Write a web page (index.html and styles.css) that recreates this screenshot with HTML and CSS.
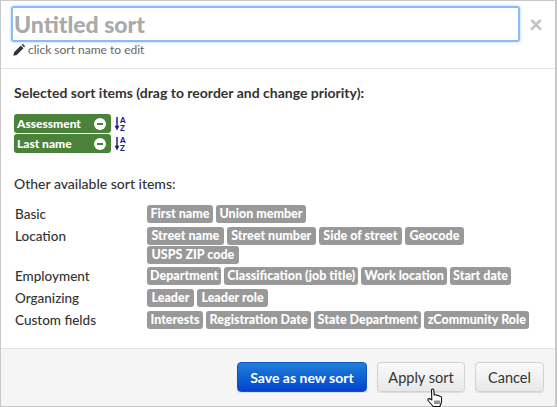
FILE: index.html
```html
<!DOCTYPE html>
<html lang="en">
<head>
  <meta charset="UTF-8" />
  <title>Edit sort</title>
  <link rel="stylesheet" href="styles.css">
</head>
<body>
  <div class="modal">
    <div class="modal-header">
      <div class="name-row">
        <input class="sort-name" type="text" placeholder="Untitled sort" />
        <span class="close">&times;</span>
      </div>
      <div class="hint">
        <svg class="pencil" width="12" height="12" viewBox="0 0 11 11"><path d="M0.3 10.7 L1 7.6 L7.2 1.4 L9.6 3.8 L3.4 10 Z M7.9 0.7 L8.4 0.3 Q9 0 9.5 0.3 L10.7 1.5 Q11 2 10.7 2.6 L10.3 3.1 Z" fill="#333"/></svg>
        click sort name to edit
      </div>
    </div>

    <div class="modal-body">
      <h4 class="heading">Selected sort items (drag to reorder and change priority):</h4>
      <div class="selected-list">
        <div class="selected-row">
          <span class="chip-green">Assessment <span class="minus"></span></span>
          <svg class="sort-icon" width="13" height="16" viewBox="0 0 13 16"><use href="#az"/></svg>
        </div>
        <div class="selected-row">
          <span class="chip-green">Last name <span class="minus"></span></span>
          <svg class="sort-icon" width="13" height="16" viewBox="0 0 13 16"><use href="#az"/></svg>
        </div>
      </div>

      <h4 class="heading heading-other">Other available sort items:</h4>
      <div class="groups">
        <div class="group-label">Basic</div>
        <div class="chips">
          <span class="chip">First name</span><span class="chip">Union member</span>
        </div>
        <div class="group-label">Location</div>
        <div class="chips chips-wide">
          <span class="chip">Street name</span><span class="chip">Street number</span><span class="chip">Side of street</span><span class="chip">Geocode</span><span class="chip">USPS ZIP code</span>
        </div>
        <div class="group-label">Employment</div>
        <div class="chips chips-tight">
          <span class="chip">Department</span><span class="chip">Classification (job title)</span><span class="chip">Work location</span><span class="chip">Start date</span>
        </div>
        <div class="group-label">Organizing</div>
        <div class="chips chips-wide">
          <span class="chip">Leader</span><span class="chip">Leader role</span>
        </div>
        <div class="group-label">Custom fields</div>
        <div class="chips">
          <span class="chip">Interests</span><span class="chip">Registration Date</span><span class="chip">State Department</span><span class="chip">zCommunity Role</span>
        </div>
      </div>
    </div>

    <div class="modal-footer">
      <button class="btn btn-primary">Save as new sort</button>
      <button class="btn">Apply sort</button>
      <button class="btn">Cancel</button>
    </div>

    <svg class="cursor" width="16" height="20" viewBox="0 0 16 20">
      <path d="M4.5 1.5 Q6 0.5 6.8 1.8 L7.2 7 Q9 6.3 10 7.4 Q11.6 6.8 12.4 8.2 Q14.4 8 14.6 10 L14.4 14.5 L12.8 18.5 L6.2 18.5 L1 12.5 Q0.4 10.6 2.4 10.6 L4.8 12 Z" fill="#fff" stroke="#111" stroke-width="1.1" stroke-linejoin="round"/>
      <path d="M8 12.5 V16 M10 12.5 V16 M12 12.5 V16" stroke="#111" stroke-width="0.9"/>
    </svg>
  </div>

  <svg class="defs" width="0" height="0">
    <defs>
      <g id="az">
        <path d="M3 1 V11" stroke="#1b1b8c" stroke-width="1.5" fill="none"/>
        <path d="M0.6 9.8 H5.4 L3 14.5 Z" fill="#1b1b8c"/>
        <text x="6" y="7" class="az-text">A</text>
        <text x="6" y="15" class="az-text">Z</text>
      </g>
    </defs>
  </svg>
</body>
</html>
```

FILE: styles.css
```css
* { box-sizing: border-box; }
html, body { margin: 0; padding: 0; }
body { font-family: Lato, "Open Sans", sans-serif; color: #333; background: #fff; }

.defs { position: absolute; }

.modal { position: relative; width: 557px; height: 407px; border: 1px solid #c8c8c8; border-right-width: 2px; display: flex; flex-direction: column; background: #fff; }

.modal-header { height: 68px; padding: 5px 12px 0 10px; border-bottom: 1px solid #e5e5e5; }
.name-row { display: flex; align-items: center; }
.sort-name { width: 512px; height: 36px; padding: 0 1px; border: 2px solid #8cbcf5; border-radius: 3px; box-shadow: 0 0 3px #a9cdf8; outline: none; font-family: inherit; font-size: 23px; font-weight: 900; }
.sort-name::placeholder { color: #aaa; opacity: 1; }
.close { margin-left: 9px; font-size: 24px; font-weight: 900; line-height: 1; color: #c4c4c4; }
.hint { display: flex; align-items: center; gap: 3px; margin-left: 2px; font-size: 12px; line-height: 15px; color: #666; }

.modal-body { flex: 1; padding: 15px 13px 0; }
.heading { margin: 0; font-size: 14px; line-height: 18px; font-weight: 700; color: #333; }
.heading-other { margin-top: 22px; font-weight: 500; }

.selected-list { display: flex; flex-direction: column; gap: 1px; margin-top: 12px; }
.selected-row { display: flex; align-items: center; gap: 3px; height: 19px; }
.chip-green { display: flex; align-items: center; justify-content: space-between; width: 97px; height: 19px; padding: 0 5px 0 3px; border-radius: 3px; background: #4a8239; color: #fff; font-size: 12px; font-weight: 900; }
.minus { position: relative; width: 12px; height: 12px; border-radius: 50%; background: #fff; }
.minus::after { content: ""; position: absolute; left: 3px; top: 5px; width: 6px; height: 2px; background: #4a8239; }
.az-text { font-family: Lato, sans-serif; font-size: 8px; font-weight: 900; fill: #1b1b8c; }

.groups { display: grid; grid-template-columns: 132px 1fr; row-gap: 3px; margin-top: 12px; margin-left: 1px; }
.group-label { font-size: 13.5px; line-height: 19px; font-weight: 500; color: #333; }
.chips { display: flex; flex-wrap: wrap; gap: 1px 3px; min-height: 19px; align-content: flex-start; }
.chip { height: 18px; padding: 0 3.5px; border-radius: 3px; background: #999; color: #fff; font-size: 12.5px; line-height: 18px; font-weight: 900; white-space: nowrap; }
.chips-wide .chip { padding: 0 4.5px; }
.chips-tight .chip { padding: 0 3.1px; }

.modal-footer { display: flex; justify-content: flex-end; gap: 10px; height: 58px; padding: 13px 11px 0 0; background: #f5f5f5; border-top: 1px solid #e3e3e3; }
.btn { height: 30px; padding: 0; border: 1px solid #d2d2d2; border-radius: 4px; background: linear-gradient(#fafafa, #e8e8e8); box-shadow: 0 1px 1px rgba(0,0,0,0.1); font-family: inherit; font-size: 14.5px; color: #333; }
.btn-primary { width: 130px; border-color: #0c55c0; background: linear-gradient(#1f80d9, #0443cc); color: #fff; font-size: 14px; font-weight: 700; }
.btn:nth-child(2) { width: 88px; }
.btn:nth-child(3) { width: 69px; }

.cursor { position: absolute; left: 426px; top: 387px; }
```
